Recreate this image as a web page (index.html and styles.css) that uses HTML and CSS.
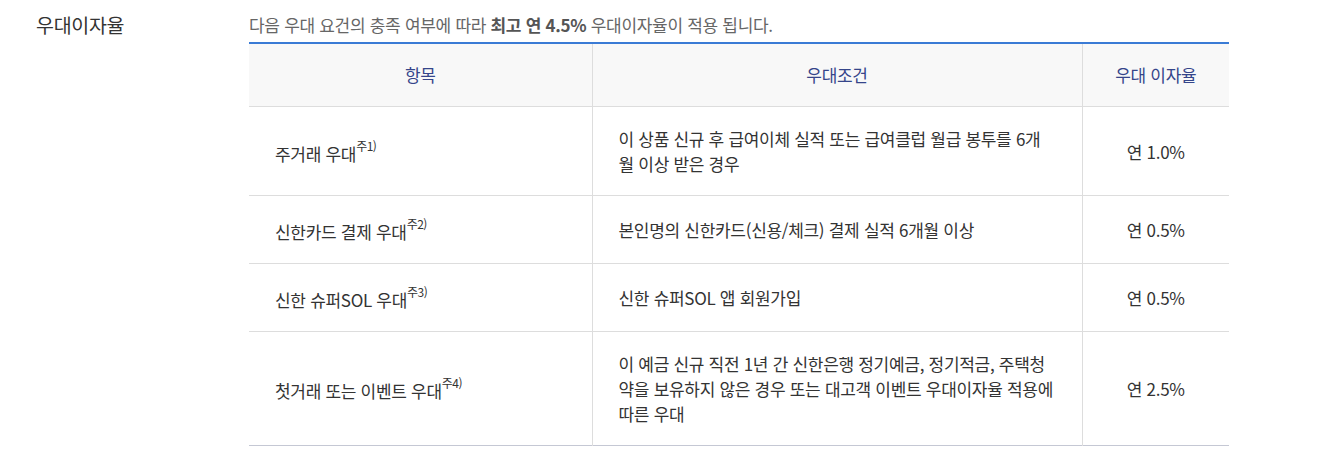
FILE: index.html
```html
<!DOCTYPE html>
<html lang="ko">
<head>
<meta charset="utf-8">
<title>우대이자율</title>
<link rel="stylesheet" href="styles.css">
</head>
<body>
<section class="section">
  <h2 class="section-title">우대이자율</h2>
  <div class="section-body">
    <p class="desc">다음 우대 요건의 충족 여부에 따라 <strong>최고 연 4.5%</strong> 우대이자율이 적용 됩니다.</p>
    <table class="rate-table">
      <colgroup>
        <col class="c1"><col class="c2"><col class="c3">
      </colgroup>
      <thead>
        <tr><th>항목</th><th>우대조건</th><th>우대 이자율</th></tr>
      </thead>
      <tbody>
        <tr>
          <td class="item">주거래 우대<sup>주1)</sup></td>
          <td class="cond">이 상품 신규 후 급여이체 실적 또는 급여클럽 월급 봉투를 6개월 이상 받은 경우</td>
          <td class="rate">연 1.0%</td>
        </tr>
        <tr>
          <td class="item">신한카드 결제 우대<sup>주2)</sup></td>
          <td class="cond">본인명의 신한카드(신용/체크) 결제 실적 6개월 이상</td>
          <td class="rate">연 0.5%</td>
        </tr>
        <tr>
          <td class="item">신한 슈퍼SOL 우대<sup>주3)</sup></td>
          <td class="cond">신한 슈퍼SOL 앱 회원가입</td>
          <td class="rate">연 0.5%</td>
        </tr>
        <tr>
          <td class="item">첫거래 또는 이벤트 우대<sup>주4)</sup></td>
          <td class="cond">이 예금 신규 직전 1년 간 신한은행 정기예금, 정기적금, 주택청약을 보유하지 않은 경우 또는 대고객 이벤트 우대이자율 적용에 따른 우대</td>
          <td class="rate">연 2.5%</td>
        </tr>
      </tbody>
    </table>
  </div>
</section>
</body>
</html>
```
FILE: styles.css
```css
html, body {
  margin: 0;
  padding: 0;
  background: #fff;
}
body {
  font-family: "Noto Sans CJK KR", "Noto Sans", sans-serif;
  color: #333;
}
.section {
  display: flex;
  padding-top: 12px;
}
.section-title {
  width: 213px;
  padding-left: 36px;
  margin: 0;
  font-size: 19.5px;
  font-weight: 400;
  line-height: 26px;
  color: #333;
  letter-spacing: -0.3px;
}
.section-body {
  width: 980px;
}
.desc {
  margin: 0 0 5px;
  font-size: 17px;
  line-height: 25px;
  color: #666;
  letter-spacing: -0.3px;
}
.desc strong {
  color: #555;
  font-weight: 700;
}
.rate-table {
  width: 980px;
  border-collapse: collapse;
  table-layout: fixed;
  border-top: 2px solid #3a7bd5;
  border-bottom: 1px solid #c5c8d4;
  font-size: 17px;
  line-height: 25px;
  letter-spacing: -0.3px;
}
.c1 { width: 343px; }
.c2 { width: 490px; }
.c3 { width: 147px; }
.rate-table th {
  background: #f8f8f8;
  color: #35458a;
  font-weight: 400;
  padding: 18px 10px 19px;
  border-bottom: 1px solid #ddd;
  border-left: 1px solid #ddd;
  text-align: center;
}
.rate-table td {
  padding: 19px 26px;
  border-top: 1px solid #ddd;
  border-left: 1px solid #ddd;
  vertical-align: middle;
}
.rate-table th:first-child,
.rate-table td:first-child {
  border-left: 0;
}
.rate-table td.rate {
  text-align: center;
  padding-left: 10px;
  padding-right: 10px;
}
.rate-table td.cond {
  padding-right: 28px;
}
.rate-table sup {
  font-size: 12px;
  line-height: 18px;
  vertical-align: 10px;
  letter-spacing: -0.5px;
}
```
